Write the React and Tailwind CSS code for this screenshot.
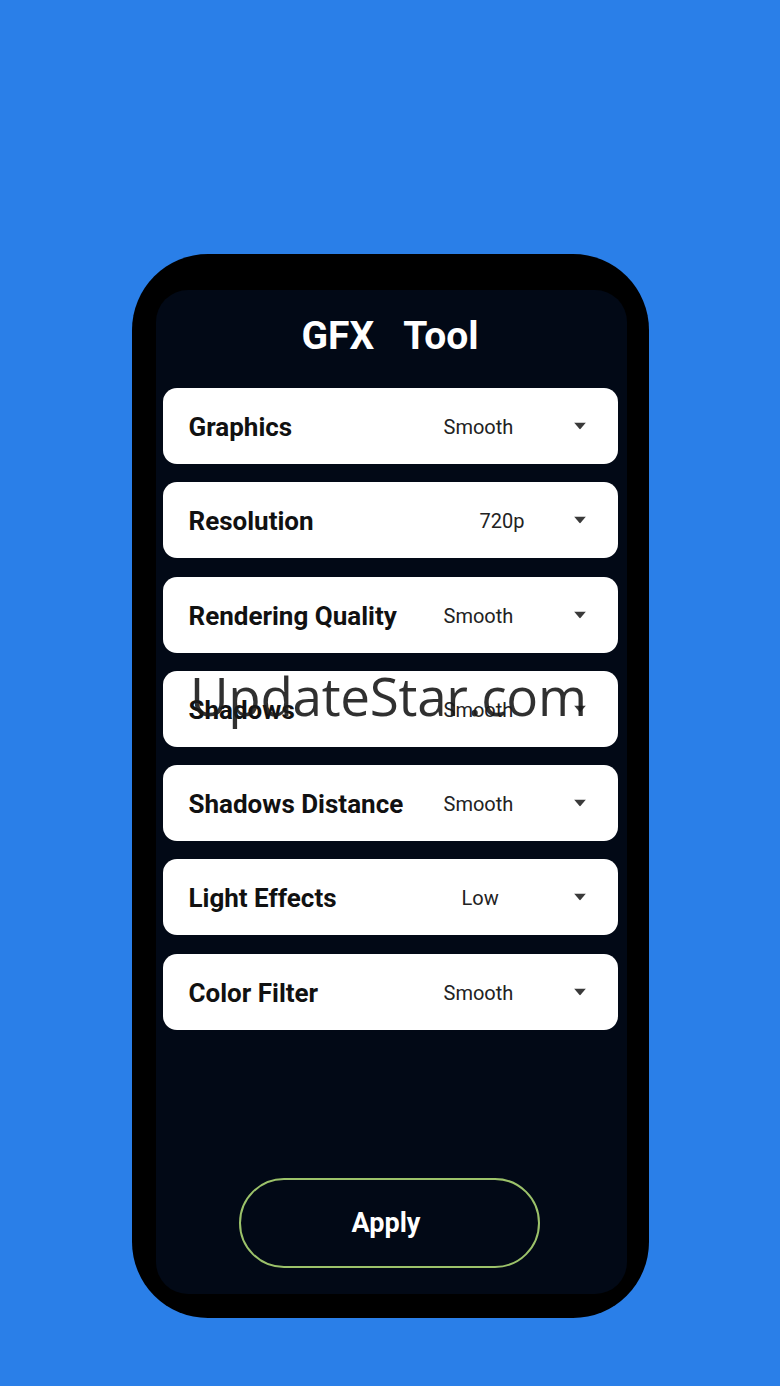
const settings = [
  { label: 'Graphics', value: 'Smooth', offset: 'pl-[281px]' },
  { label: 'Resolution', value: '720p', offset: 'pl-[317px]' },
  { label: 'Rendering Quality', value: 'Smooth', offset: 'pl-[281px]' },
  { label: 'Shadows', value: 'Smooth', offset: 'pl-[281px]' },
  { label: 'Shadows Distance', value: 'Smooth', offset: 'pl-[281px]' },
  { label: 'Light Effects', value: 'Low', offset: 'pl-[299px]' },
  { label: 'Color Filter', value: 'Smooth', offset: 'pl-[281px]' },
];

function Caret() {
  return (
    <svg width="12" height="7" viewBox="0 0 12 7" className="absolute right-[32px] top-1/2 -translate-y-1/2">
      <path d="M0 0h12L6 7z" fill="#3a3a3a" />
    </svg>
  );
}

function SettingRow({ label, value, offset }) {
  return (
    <div className="relative h-[76px] rounded-[14px] bg-white">
      <div className="absolute left-[26px] top-0 flex h-full items-center pt-[3px] text-[26px] font-bold text-[#111]">
        {label}
      </div>
      <div className={`flex h-full items-center pt-[2px] text-[20px] text-[#222] ${offset}`}>{value}</div>
      <Caret />
    </div>
  );
}

export default function App() {
  return (
    <div
      className="relative flex h-[1386px] w-[780px] justify-center bg-[#2a7fe8] pt-[254px]"
      style={{ fontFamily: 'Roboto, "Noto Sans", sans-serif' }}
    >
      <div className="h-[1064px] w-[517px] rounded-[76px] bg-black pb-[24px] pl-[24px] pr-[22px] pt-[36px]">
        <div className="flex h-full flex-col rounded-[32px] bg-[#020916] pl-[7px] pr-[9px]">
          <h1 className="mt-[21px] text-center text-[39px] font-bold leading-[50px] text-white">
            GFX&nbsp;&nbsp;&nbsp;Tool
          </h1>
          <div className="mt-[27px] flex flex-col gap-[18.3px]">
            {settings.map((s) => (
              <SettingRow key={s.label} {...s} />
            ))}
          </div>
          <div className="mt-auto mb-[26px] flex justify-center pr-[2px]">
            <button className="h-[90px] w-[301px] rounded-full border-2 border-[#9cc26a] pr-[6px] text-[27px] font-bold text-white">
              Apply
            </button>
          </div>
        </div>
      </div>
      <div
        className="pointer-events-none absolute left-[190px] top-[660px] text-[53px] leading-[72px] tracking-[-0.3px] text-[#1a1a1a]/90"
        style={{ fontFamily: '"Open Sans", sans-serif' }}
      >
        UpdateStar.com
      </div>
    </div>
  );
}
